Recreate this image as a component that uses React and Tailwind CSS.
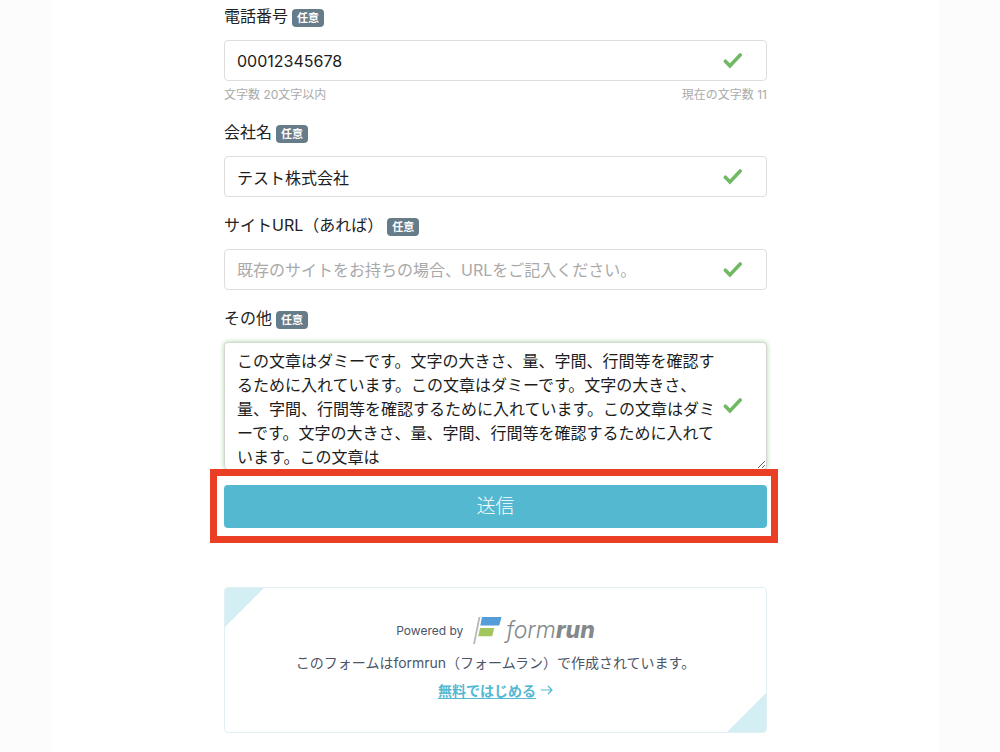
import { useState } from 'react';

const DUMMY_TEXT = 'この文章はダミーです。文字の大きさ、量、字間、行間等を確認するために入れています。';

function CheckMark() {
  return (
    <svg className="pointer-events-none absolute right-6 top-1/2 -translate-y-1/2" width="20" height="18" viewBox="0 0 20 18" fill="none" aria-hidden="true">
      <path d="M2.4 9.2 L6.9 13.9 L17.2 3" stroke="#72b966" strokeWidth="3.6" strokeLinecap="round" strokeLinejoin="miter" />
    </svg>
  );
}

function FieldLabel({ htmlFor, children }) {
  return (
    <label htmlFor={htmlFor} className="mb-[11px] flex h-6 items-center gap-1 text-base leading-6 text-[#222]">
      <span className="pb-0.5">{children}</span>
      <span className="mt-px rounded bg-[#677c89] px-[5px] text-[11px] font-semibold leading-[18px] text-white">任意</span>
    </label>
  );
}

function TextField({ id, label, type = 'text', ...props }) {
  return (
    <div>
      <FieldLabel htmlFor={id}>{label}</FieldLabel>
      <div className="relative">
        <input
          id={id}
          type={type}
          className="block h-[41px] w-full rounded border border-[#dedede] bg-white pl-3 pr-12 text-base text-[#1c1c1c] outline-none placeholder:text-[#a9a9a9] focus:shadow-[0_0_5px_#a9d8a0]"
          {...props}
        />
        <CheckMark />
      </div>
    </div>
  );
}

function FormrunLogo() {
  return (
    <span className="flex items-center" aria-label="formrun">
      <svg width="29" height="29" viewBox="0 0 29 29" aria-hidden="true">
        <path d="M5.6 1 H7.4 L1.9 28 H0.1 Z" fill="#b4b8bb" />
        <path d="M9 1 H28.5 L26.3 9.4 H7.3 Z" fill="#559dd9" />
        <path d="M7 12 H21.3 L19.2 20.2 H5.2 Z" fill="#a2c75e" />
      </svg>
      <span className="ml-1 font-['Inter'] text-[23px] font-light italic leading-[29px] text-[#85898c]">
        form<span className="font-extrabold">run</span>
      </span>
    </span>
  );
}

function PoweredByCard() {
  return (
    <section className="relative mt-[59px] flex h-[146px] flex-col items-center overflow-hidden rounded border border-[#e0f0f2] bg-white pt-7 text-[#4a5568]">
      <div className="absolute left-0 top-0 size-[39px] bg-[#d3eff3] [clip-path:polygon(0_0,100%_0,0_100%)]" />
      <div className="absolute bottom-0 right-0 size-[39px] bg-[#d3eff3] [clip-path:polygon(100%_0,100%_100%,0_100%)]" />
      <div className="flex items-center gap-[10px] text-xs">
        <span>Powered by</span>
        <FormrunLogo />
      </div>
      <p className="mt-2 text-sm leading-5">このフォームはformrun（フォームラン）で作成されています。</p>
      <a href="#start" className="mt-2 flex items-center gap-1 text-sm leading-5 text-[#54b8d1]">
        <span className="font-bold underline underline-offset-2">無料ではじめる</span>
        <svg width="13" height="12" viewBox="0 0 13 12" fill="none" stroke="currentColor" strokeWidth="1.2" aria-hidden="true">
          <path d="M1 5 H12 M8 1 L12 5 L8 9" />
        </svg>
      </a>
    </section>
  );
}

export default function App() {
  const [phone, setPhone] = useState('00012345678');
  const [company, setCompany] = useState('テスト株式会社');
  const [site, setSite] = useState('');
  const [note, setNote] = useState(`${DUMMY_TEXT.repeat(3)}この文章は`);

  return (
    <div lang="ja" className="min-h-screen bg-[#fcfcfc] pr-[9px] font-['Inter','Noto_Sans_CJK_JP',sans-serif]">
      <main className="mx-auto min-h-screen max-w-[887px] bg-white px-4 pb-[19px] pt-[5px]">
        <form className="mx-auto max-w-[543px]" onSubmit={(e) => e.preventDefault()}>
          <div className="flex flex-col gap-[17px]">
            <div>
              <TextField id="phone" type="tel" label="電話番号" maxLength={20} value={phone} onChange={(e) => setPhone(e.target.value)} />
              <div className="mt-[5px] flex justify-between text-xs leading-[18px] text-[#aaa]">
                <span>文字数 20文字以内</span>
                <span>現在の文字数 {phone.length}</span>
              </div>
            </div>
            <TextField id="company" label="会社名" value={company} onChange={(e) => setCompany(e.target.value)} />
            <TextField
              id="site"
              label="サイトURL（あれば）"
              placeholder="既存のサイトをお持ちの場合、URLをご記入ください。"
              value={site}
              onChange={(e) => setSite(e.target.value)}
            />
            <div>
              <FieldLabel htmlFor="note">その他</FieldLabel>
              <div className="relative">
                <textarea
                  id="note"
                  value={note}
                  onChange={(e) => setNote(e.target.value)}
                  className="block h-32 w-full resize-y overflow-hidden rounded border border-[#d2d8d0] bg-white pb-0 pl-3 pr-12 pt-1.5 text-base leading-6 text-[#1c1c1c] shadow-[0_0_5px_#a9d8a0] outline-none [line-break:loose]"
                />
                <CheckMark />
              </div>
            </div>
          </div>

          <div className="relative mt-[15px]">
            <button type="submit" className="block h-[43px] w-full rounded bg-[#54b8d1] pt-0.5 text-[19px] font-light text-white">
              送信
            </button>
            {/* callout frame around the submit button */}
            <div className="pointer-events-none absolute -bottom-[15px] -left-[14px] -right-[11px] -top-4 border-[7px] border-[#ea3f25]" />
          </div>

          <PoweredByCard />
        </form>
      </main>
    </div>
  );
}
